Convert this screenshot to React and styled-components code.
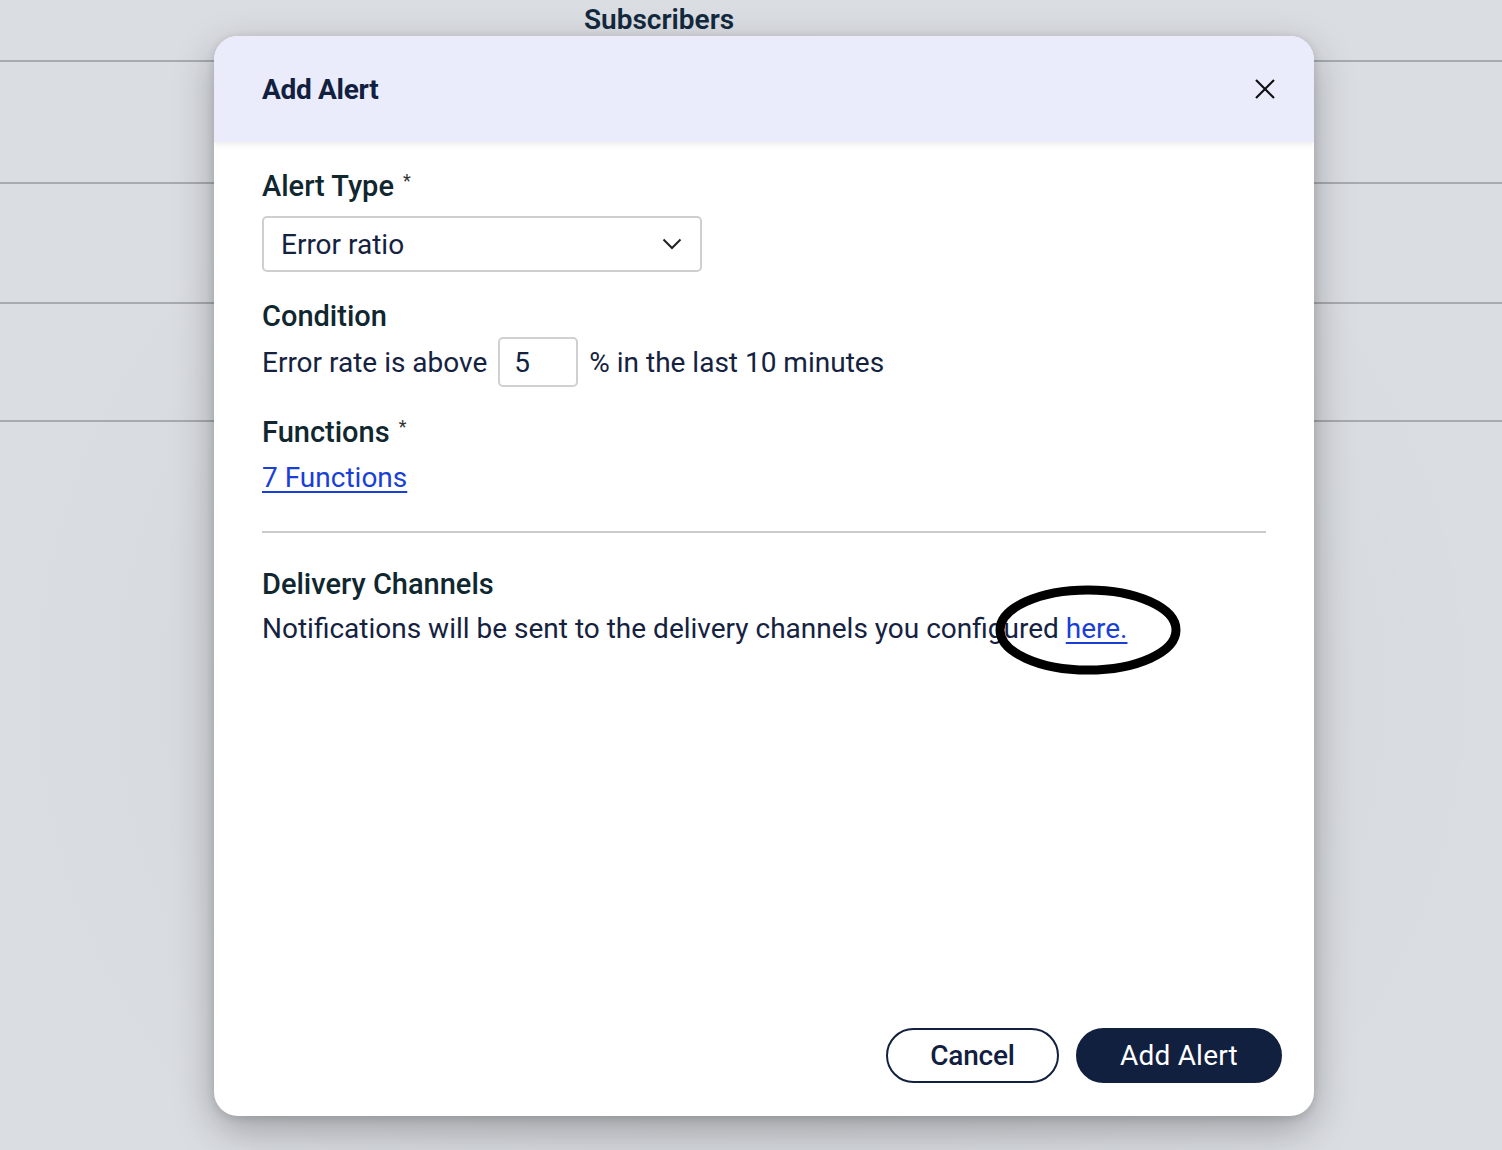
import React from 'react';
import styled, { createGlobalStyle } from 'styled-components';

const GlobalStyle = createGlobalStyle`
    html, body {
        margin: 0;
        padding: 0;
    }
    body {
        width: 1502px;
        height: 1150px;
        overflow: hidden;
        background-color: #dadde2;
        font-family: Roboto, "Liberation Sans", sans-serif;
    }
`;

const Page = styled.div`
    position: relative;
    width: 1502px;
    height: 1150px;
    background-color: #dadde2;
`;

const BackTable = styled.div`
    display: flex;
    flex-direction: column;
`;

const BackHead = styled.div`
    height: 62px;
    display: flex;
    justify-content: flex-start;
    padding-left: 584px;
    box-sizing: border-box;
    border-bottom: 2px solid #a7abb0;
`;

const HeadCell = styled.div`
    font-size: 28px;
    font-weight: 600;
    color: #13293d;
    line-height: 40px;
`;

const BackRow = styled.div`
    height: ${(p) => p.h}px;
    border-bottom: 2px solid #a7abb0;
`;

const Backdrop = styled.div`
    position: absolute;
    inset: 0;
    background: radial-gradient(ellipse at 50% 60%, rgba(0, 0, 0, 0.06), rgba(0, 0, 0, 0) 70%);
`;

const Modal = styled.div`
    position: absolute;
    left: 214px;
    top: 36px;
    width: 1100px;
    height: 1080px;
    background-color: #ffffff;
    border-radius: 24px;
    box-shadow: 0 14px 40px rgba(0, 0, 0, 0.28), 0 2px 10px rgba(0, 0, 0, 0.12);
    display: flex;
    flex-direction: column;
    overflow: hidden;
`;

const ModalHeader = styled.div`
    height: 106px;
    flex-shrink: 0;
    background-color: #eaecfb;
    display: flex;
    align-items: center;
    justify-content: space-between;
    padding: 0 38px 0 48px;
    box-shadow: 0 3px 6px rgba(0, 0, 0, 0.07);
    position: relative;
    z-index: 1;
`;

const Title = styled.h2`
    margin: 0;
    font-size: 28px;
    font-weight: 700;
    color: #12203f;
    letter-spacing: -0.3px;
`;

const CloseButton = styled.button`
    width: 22px;
    height: 22px;
    padding: 0;
    border: none;
    background: none;
    display: flex;
    align-items: center;
    justify-content: center;
    cursor: pointer;
`;

const ModalBody = styled.div`
    flex: 1;
    padding: 22px 48px 0;
    display: flex;
    flex-direction: column;
`;

const Label = styled.div`
    font-size: 29px;
    font-weight: 500;
    line-height: 34px;
    color: #10272f;
    margin-top: ${(p) => p.mt || 0}px;
`;

const Star = styled.span`
    font-size: 18px;
    font-weight: 400;
    vertical-align: 9px;
    margin-left: 9px;
    color: #333;
`;

const Select = styled.div`
    margin-top: 13px;
    width: 440px;
    height: 56px;
    box-sizing: border-box;
    border: 2px solid #cfcfcf;
    border-radius: 5px;
    display: flex;
    align-items: center;
    justify-content: space-between;
    padding: 0 18px 0 17px;
    font-size: 28px;
    color: #15223f;
`;

const ConditionRow = styled.div`
    margin-top: 4px;
    display: flex;
    align-items: center;
    gap: 11px;
    font-size: 28px;
    color: #15223f;
`;

const NumberBox = styled.div`
    width: 80px;
    height: 50px;
    box-sizing: border-box;
    border: 2px solid #d0d0d0;
    border-radius: 5px;
    display: flex;
    align-items: center;
    padding-left: 14px;
`;

const Link = styled.a`
    color: #1a3fd6;
    text-decoration: underline;
    text-underline-offset: 4px;
    text-decoration-thickness: 2px;
    cursor: pointer;
`;

const FunctionsLink = styled(Link)`
    margin-top: 12px;
    font-size: 28px;
    line-height: 34px;
    align-self: flex-start;
`;

const Divider = styled.hr`
    margin: 36px 0 0;
    border: none;
    border-top: 2px solid #cccccc;
`;

const Note = styled.div`
    margin-top: 11px;
    font-size: 28px;
    line-height: 34px;
    color: #15223f;
`;

const Circled = styled.span`
    position: relative;
`;

const Ring = styled.svg`
    position: absolute;
    left: -74px;
    top: -28px;
    pointer-events: none;
`;

const Footer = styled.div`
    display: flex;
    justify-content: flex-end;
    gap: 17px;
    padding: 0 32px 33px;
`;

const Button = styled.button`
    height: 55px;
    width: ${(p) => p.w}px;
    border-radius: 28px;
    border: 2px solid #12203f;
    background-color: ${(p) => (p.primary ? '#12203f' : '#ffffff')};
    color: ${(p) => (p.primary ? '#ffffff' : '#12203f')};
    font-family: Roboto, "Liberation Sans", sans-serif;
    font-size: 28px;
    font-weight: ${(p) => (p.primary ? 400 : 500)};
    letter-spacing: ${(p) => (p.primary ? '0.2px' : '-0.2px')};
    cursor: pointer;
`;

const App = () => {
    return (
        <>
            <GlobalStyle />
            <Page>
                <BackTable>
                    <BackHead>
                        <HeadCell>Subscribers</HeadCell>
                    </BackHead>
                    <BackRow h={120} />
                    <BackRow h={118} />
                    <BackRow h={116} />
                </BackTable>
                <Backdrop />
                <Modal>
                    <ModalHeader>
                        <Title>Add Alert</Title>
                        <CloseButton aria-label="close">
                            <svg width="22" height="22" viewBox="0 0 22 22">
                                <path d="M2 2 L20 20 M20 2 L2 20" stroke="#111" strokeWidth="2.2" fill="none" />
                            </svg>
                        </CloseButton>
                    </ModalHeader>
                    <ModalBody>
                        <Label>Alert Type<Star>*</Star></Label>
                        <Select>
                            <span>Error ratio</span>
                            <svg width="20" height="12" viewBox="0 0 20 12">
                                <path d="M1.5 1.5 L10 10 L18.5 1.5" stroke="#222" strokeWidth="2" fill="none" />
                            </svg>
                        </Select>
                        <Label mt={27}>Condition</Label>
                        <ConditionRow>
                            <span>Error rate is above</span>
                            <NumberBox>5</NumberBox>
                            <span>% in the last 10 minutes</span>
                        </ConditionRow>
                        <Label mt={23}>Functions<Star>*</Star></Label>
                        <FunctionsLink>7 Functions</FunctionsLink>
                        <Divider />
                        <Label mt={34}>Delivery Channels</Label>
                        <Note>
                            Notifications will be sent to the delivery channels you configured{' '}
                            <Circled>
                                <Link>here.</Link>
                                <Ring width="194" height="94" viewBox="0 0 194 94">
                                    <ellipse cx="96" cy="46" rx="88" ry="40" stroke="#000" strokeWidth="9" fill="none" />
                                </Ring>
                            </Circled>
                        </Note>
                    </ModalBody>
                    <Footer>
                        <Button w={173}>Cancel</Button>
                        <Button w={206} primary>Add Alert</Button>
                    </Footer>
                </Modal>
            </Page>
        </>
    );
};

export default App;
